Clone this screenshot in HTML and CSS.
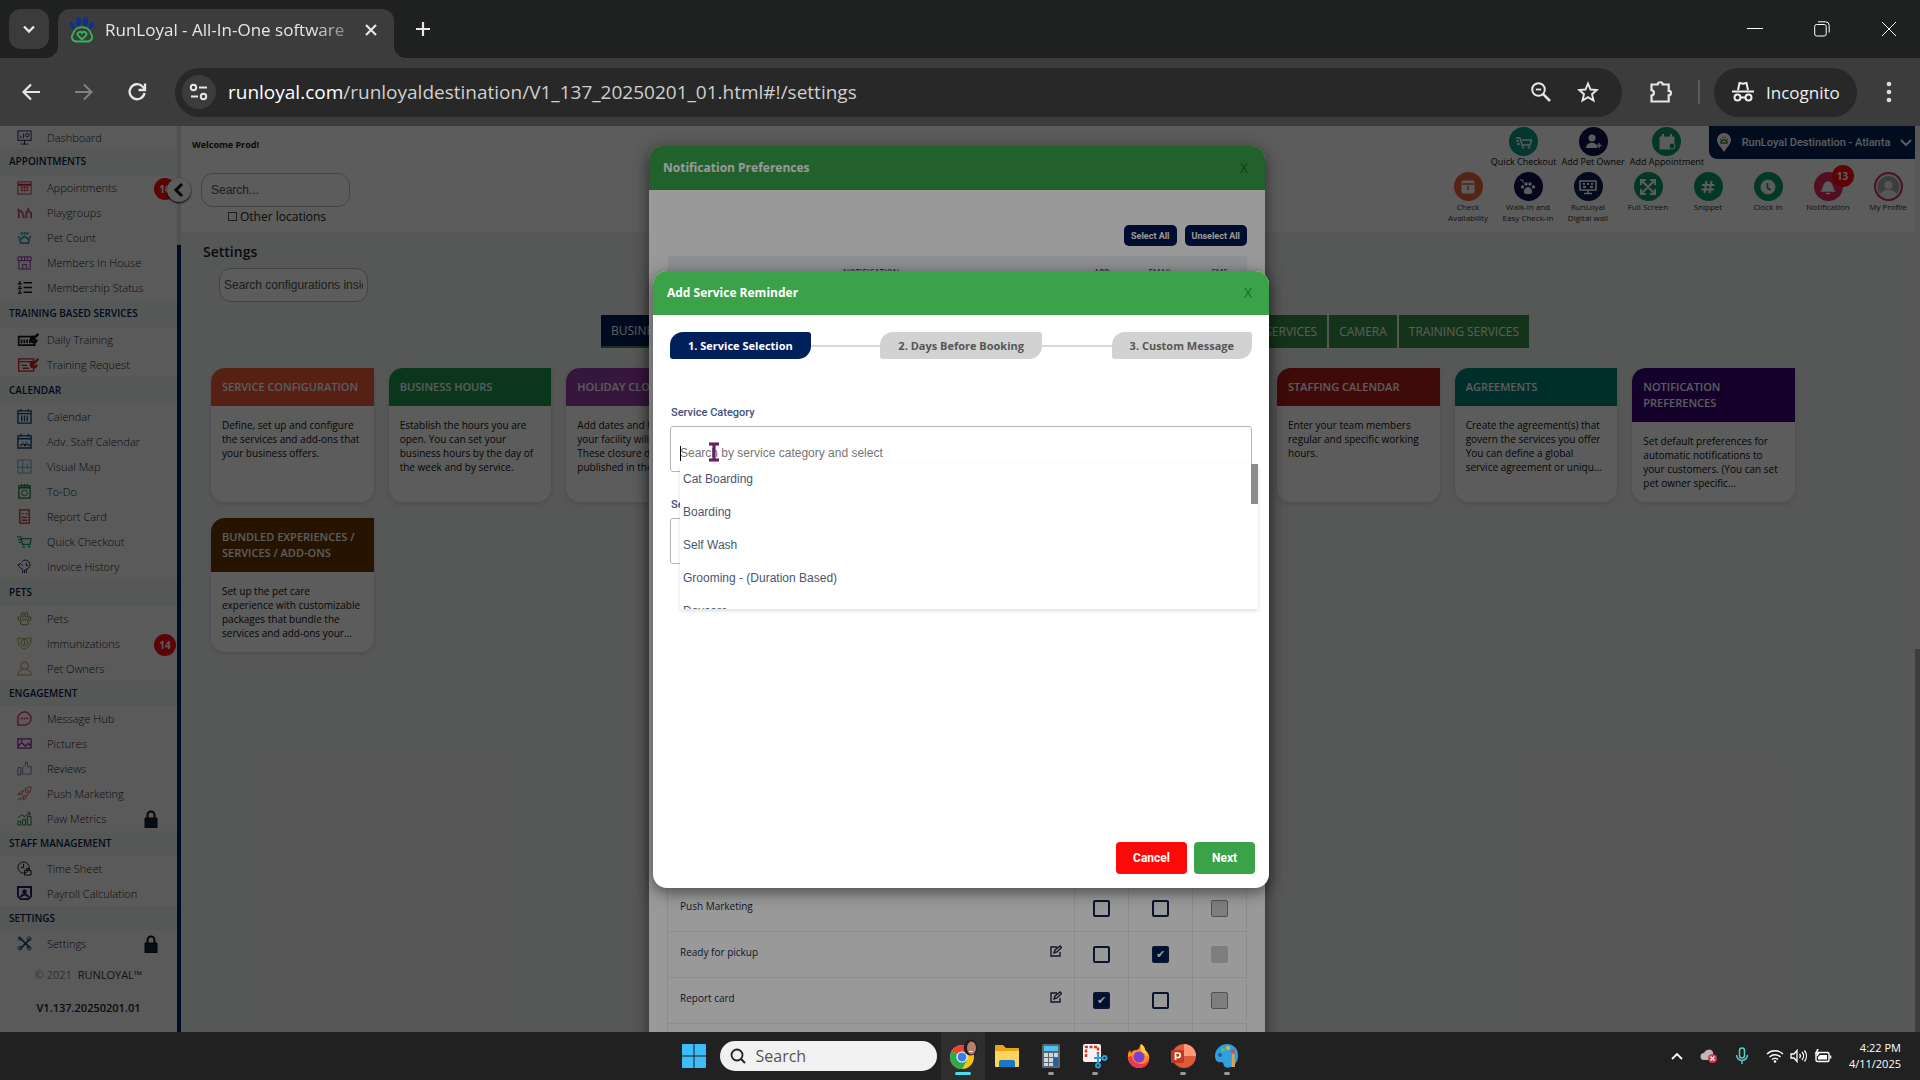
FILE: index.html
```html
<!DOCTYPE html>
<html lang="en">
<head>
<meta charset="utf-8">
<title>RunLoyal - All-In-One software</title>
<link rel="stylesheet" href="styles.css">
</head>
<body>
<header class="browser">
  <div class="tabstrip">
    <button class="tab-search" aria-label="Search tabs"><svg width="16" height="16" viewBox="0 0 16 16"><path d="M3 5.500l5 5 5-5" stroke-width="2.400"/></svg></button>
    <div class="tab">
      <svg class="favicon" width="26" height="26" viewBox="0 0 26 26"><g fill="#0b2f9c" stroke="none"><ellipse cx="9.500" cy="4.500" rx="2.400" ry="4.300"/><ellipse cx="16.500" cy="4.500" rx="2.400" ry="4.300"/><ellipse cx="3.300" cy="8.500" rx="2" ry="3.800" transform="rotate(-25 3.300 8.500)"/><ellipse cx="22.700" cy="8.500" rx="2" ry="3.800" transform="rotate(25 22.700 8.500)"/></g><g stroke="#35b35c" stroke-width="1.800"><path d="M7 24.500a4.500 4.500 0 0 1-3-7.500 9.300 9.300 0 0 1 18 0 4.500 4.500 0 0 1-3 7.500z"/><path d="M13 22.500l-4-4a2.300 2.300 0 0 1 4-2.500 2.300 2.300 0 0 1 4 2.500z"/></g></svg>
      <span class="tab-title">RunLoyal - All-In-One software</span>
      <button class="plain" aria-label="Close tab"><svg width="16" height="16" viewBox="0 0 16 16"><path d="M3 3l10 10M13 3L3 13" stroke-width="2.200"/></svg></button>
    </div>
    <button class="plain new-tab" aria-label="New tab"><svg width="18" height="18" viewBox="0 0 18 18"><path d="M9 2v14M2 9h14" stroke-width="2.200"/></svg></button>
    <div class="window-controls">
      <button class="plain" aria-label="Minimize"><svg width="16" height="16" viewBox="0 0 16 16"><path d="M0 7.500h16"/></svg></button>
      <button class="plain" aria-label="Restore"><svg width="16" height="16" viewBox="0 0 16 16"><rect x=".7" y="3.500" width="11.500" height="11.500" rx="2"/><path d="M4 .8h7.500a3.700 3.700 0 0 1 3.700 3.700v7"/></svg></button>
      <button class="plain" aria-label="Close"><svg width="16" height="16" viewBox="0 0 16 16"><path d="M1 1l14 14M15 1L1 15"/></svg></button>
    </div>
  </div>
  <div class="toolbar">
    <div class="nav-buttons">
      <button class="plain" aria-label="Back"><svg width="20" height="20" viewBox="0 0 20 20"><path d="M19 10H2.500M10 2.500L2.500 10l7.500 7.500" stroke-width="2.200"/></svg></button>
      <button class="plain faded" aria-label="Forward"><svg width="20" height="20" viewBox="0 0 20 20"><path d="M1 10h16.500M10 2.500l7.500 7.500-7.500 7.500" stroke-width="2"/></svg></button>
      <button class="plain" aria-label="Reload"><svg width="20" height="20" viewBox="0 0 20 20"><path d="M17.500 11a7.500 7.500 0 1 1-2-6.500l2.500 2.700" stroke-width="2.300"/><path d="M18 1.500V8h-6.500" stroke-width="2.300"/></svg></button>
    </div>
    <div class="omnibox">
      <button class="site-info" aria-label="Site information"><svg width="20" height="18" viewBox="0 0 20 18"><g stroke-width="2"><circle cx="4.500" cy="4.500" r="2.700"/><path d="M10 4.500h8M2 13.500h7"/><circle cx="14.500" cy="13.500" r="2.700"/></g></svg></button>
      <span class="url"><b>runloyal.com</b>/runloyaldestination/V1_137_20250201_01.html#!/settings</span>
      <button class="plain" aria-label="Zoom"><svg width="22" height="22" viewBox="0 0 22 22"><circle cx="8.500" cy="8.500" r="6.300" stroke-width="2"/><path d="M13.200 13.200L20 20" stroke-width="2.600"/><path d="M5.800 8.500h5.400" stroke-width="1.800"/></svg></button>
      <button class="plain" aria-label="Bookmark"><svg width="22" height="22" viewBox="0 0 22 22"><path d="M11 2.500l2.500 6 6.300.5-4.800 4.200 1.500 6.300-5.500-3.400-5.500 3.400L7 13.200 2.200 9l6.300-.5z" stroke-width="1.900"/></svg></button>
    </div>
    <button class="plain puzzle" aria-label="Extensions"><svg width="24" height="24" viewBox="0 0 24 24"><path d="M2.500 4.500h6.200c0-3 5-3 5 0h6v6.300c3 0 3 4.600 0 4.600v6.100H2.500v-6c3.200-.4 3.200-5 0-5.400z" stroke-width="2.200"/></svg></button>
    <span class="divider"></span>
    <button class="incognito"><svg width="22" height="22" viewBox="0 0 22 22"><path d="M6 9L7.500 2l3.500.8 3.500-.8L16 9"  stroke-width="2"/><path d="M0 10.500h22" stroke-width="2"/><g stroke-width="2"><circle cx="5.500" cy="16.500" r="3"/><circle cx="16.500" cy="16.500" r="3"/><path d="M8.500 16.500h5"/></g></svg>Incognito</button>
    <button class="plain" aria-label="Menu"><svg width="6" height="22" viewBox="0 0 6 22"><g fill="#ddd" stroke="none"><circle cx="3" cy="3" r="2.300"/><circle cx="3" cy="11" r="2.300"/><circle cx="3" cy="19" r="2.300"/></g></svg></button>
  </div>
</header>

<div class="viewport">
  <div class="app">
    <nav class="sidebar">
      <a href="#" class="item first"><svg viewBox="0 0 16 16" class="violet"><rect x="1" y="1" width="14" height="10"/><path d="M4 9V6M7 9V4M8 11v4M4 15h8"/><circle cx="11" cy="5.500" r="1.800"/></svg>Dashboard</a>
      <h2>APPOINTMENTS</h2>
      <a href="#" class="item"><svg viewBox="0 0 16 16" class="red"><rect x="1" y="2" width="14" height="13"/><path d="M1 5h14M4 8h2M7 8h2M10 8h2M4 11h2M7 11h2M10 11h2" stroke-width="2"/></svg>Appointments<span class="badge">16</span></a>
      <a href="#" class="item"><svg viewBox="0 0 16 16" class="pink"><path d="M2 14V6l3 1 2 4v3M2 6L1 4M15 14V9l-3-3-2 2v6M12 6V3" stroke-width="2"/></svg>Playgroups</a>
      <a href="#" class="item"><svg viewBox="0 0 16 16" class="cyan"><path d="M4 14l-1-4 5-3 5 3-1 4zM1 7l2 1M13 8l2-1M5 2v3M8 2v3M11 2v3" stroke-width="2"/></svg>Pet Count</a>
      <a href="#" class="item"><svg viewBox="0 0 16 16" class="purple"><path d="M1 2h14v4H1zM2 6v9h12V6M6 15v-5h4v5M5 2v4M8 2v4M11 2v4"/></svg>Members In House</a>
      <a href="#" class="item"><svg viewBox="0 0 16 16" class="black"><path d="M7 3h9M7 8h9M7 13h9M1 4h4M1 9h4M1 14h4M3 1v2M3 6v2M3 11v2" stroke-width="1.500"/></svg>Membership Status</a>
      <h2>TRAINING BASED SERVICES</h2>
      <a href="#" class="item"><svg viewBox="0 0 24 16" class="black wide"><path d="M1 5h17v9H1zM4 8v4M7 8v4M10 8v4M13 8v4" stroke-width="1.800"/><path d="M15 9l7-7M17 5a3 3 0 1 0 3 3" stroke-width="2.600"/></svg>Daily Training</a>
      <a href="#" class="item"><svg viewBox="0 0 24 16" class="red wide"><path d="M1 2h16v13H1zM1 5h14M4 9h6M5 12h7" stroke-width="1.400"/><path d="M15 9l7-7M17 5a3 3 0 1 0 3 3" stroke-width="2.400"/></svg>Training Request</a>
      <h2>CALENDAR</h2>
      <a href="#" class="item"><svg viewBox="0 0 16 16" class="blue"><path d="M1 2h14v13H1zM1 5h14M4 0v3M12 0v3M5 7v6M8 7v6M11 7v6" stroke-width="1.400"/></svg>Calendar</a>
      <a href="#" class="item"><svg viewBox="0 0 16 16" class="blue"><path d="M1 2h14v13H1zM1 5h14M4 0v3M12 0v3M4 13c0-3 5-3 5 0M8 13c0-3 5-3 5 0M6 8v1M10 8v1" stroke-width="1.500"/></svg>Adv. Staff Calendar</a>
      <a href="#" class="item"><svg viewBox="0 0 16 16" class="sky"><path d="M1 1h14v14H1zM6 1v14M1 9h14M11 5v6"/></svg>Visual Map</a>
      <a href="#" class="item"><svg viewBox="0 0 16 16" class="green"><path d="M2 2h12v13H2zM2 4h12M5 0v3M8 0v3M11 0v3" stroke-width="1.400"/><circle cx="8" cy="9.500" r="3"/></svg>To-Do</a>
      <a href="#" class="item"><svg viewBox="0 0 16 16" class="red"><path d="M3 1h10v14H3zM5 5h2M9 5h2M5 9h6M5 12h6" stroke-width="1.400"/></svg>Report Card</a>
      <a href="#" class="item"><svg viewBox="0 0 16 16" class="teal"><path d="M0 3h4l2 8h8l1-6H5M1 6h3M2 9h3" stroke-width="1.400"/><circle cx="7" cy="13.500" r="1"/><circle cx="13" cy="13.500" r="1"/></svg>Quick Checkout</a>
      <a href="#" class="item"><svg viewBox="0 0 16 16" class="violet"><path d="M5 3a5 5 0 1 1 5 8l-2 1v3M6 15v-4L3 9 1 6l3-1 2 2M10 11v4M10 4v3h2"/></svg>Invoice History</a>
      <h2>PETS</h2>
      <a href="#" class="item"><svg viewBox="0 0 16 16" class="olive"><path d="M4 14c-1-3 2-5 4-5s5 2 4 5c-1 1-7 1-8 0z"/><ellipse cx="2.500" cy="8" rx="1.500" ry="2"/><ellipse cx="6" cy="4" rx="1.500" ry="2.500"/><ellipse cx="10" cy="4" rx="1.500" ry="2.500"/><ellipse cx="13.500" cy="8" rx="1.500" ry="2"/></svg>Pets</a>
      <a href="#" class="item"><svg viewBox="0 0 16 16" class="lime"><path d="M1 2c4 1 10 1 14 0 0 7-2 10-7 12C3 12 1 9 1 2z"/><circle cx="8" cy="7" r="3.500"/><path d="M8 5v4"/></svg>Immunizations<span class="badge">14</span></a>
      <a href="#" class="item"><svg viewBox="0 0 16 16" class="orange"><circle cx="8" cy="5" r="4"/><path d="M1 15c0-4 2-5 5-6M15 15c0-4-2-5-5-6M1 15h14"/></svg>Pet Owners</a>
      <h2 class="tight">ENGAGEMENT</h2>
      <a href="#" class="item"><svg viewBox="0 0 16 16" class="rose"><path d="M1 15V8a7 7 0 1 1 7 7zM4 8h2M7 8h2M10 8h2" stroke-width="1.400"/></svg>Message Hub</a>
      <a href="#" class="item"><svg viewBox="0 0 16 16" class="purple"><path d="M1 3h14v10H1zM1 11l4-4 4 4 3-3 3 3M4 5h2" stroke-width="1.400"/></svg>Pictures</a>
      <a href="#" class="item"><svg viewBox="0 0 16 16" class="lilac"><path d="M1 7h3v8H1zM6 14V7l3-3V1h2v5h4v8z"/></svg>Reviews</a>
      <a href="#" class="item"><svg viewBox="0 0 16 16" class="flame"><path d="M5 9c1-5 5-8 10-8 0 5-3 9-8 10zM5 9L1 9l3-3 2 0M7 11v4l3-3V10M1 15l3-3M3 15l3-3"/><circle cx="10.500" cy="5.500" r="1.500"/></svg>Push Marketing</a>
      <a href="#" class="item"><svg viewBox="0 0 16 16" class="green"><path d="M1 11h3v4H1zM6 9h3v6H6zM11 6h4v9h-4zM1 7l4-3 3 2 6-4M11 1l3 1-1 3"/></svg>Paw Metrics<svg class="lock" viewBox="0 0 14 18"><path d="M3.500 9V5a3.500 3.500 0 0 1 7 0v4" stroke-width="2"/><path class="body" d="M1 8h12v10H1z"/></svg></a>
      <h2 class="tight">STAFF MANAGEMENT</h2>
      <a href="#" class="item"><svg viewBox="0 0 16 16" class="black"><circle cx="7" cy="7" r="6"/><path d="M7 3v4H4M8 10h7v5H8zM10 10V8h3v2"/></svg>Time Sheet</a>
      <a href="#" class="item"><svg viewBox="0 0 16 16" class="violet"><path d="M1 1h14v10l-3 3H4l-3-3z" stroke-width="2"/><circle cx="8" cy="6" r="2" fill="currentColor"/><path d="M4 12c1-4 7-4 8 0" stroke-width="2"/></svg>Payroll Calculation</a>
      <h2 class="tight">SETTINGS</h2>
      <a href="#" class="item"><svg viewBox="0 0 16 16" class="steel"><path d="M2 1l12 12M14 3L3 14" stroke-width="2"/><circle cx="13" cy="3" r="2"/><circle cx="3" cy="13" r="2"/><circle cx="13" cy="13" r="2"/><circle cx="3" cy="3" r="1.500"/></svg>Settings<svg class="lock" viewBox="0 0 14 18"><path d="M3.500 9V5a3.500 3.500 0 0 1 7 0v4" stroke-width="2"/><path class="body" d="M1 8h12v10H1z"/></svg></a>
      <p class="copyright">© 2021 &nbsp;<b>RUNLOYAL™</b></p>
      <p class="version">V1.137.20250201.01</p>
    </nav>
    <div class="rail">
      <span class="rail-thumb"></span>
      <button class="collapse" aria-label="Collapse menu"><svg width="12" height="16" viewBox="0 0 12 16"><path d="M9 2L3 8l6 6" stroke="#111" stroke-width="3"/></svg></button>
    </div>
    <main>
      <div class="topbar">
        <div class="top-left">
          <p class="welcome">Welcome Prod!</p>
          <input class="round-input" type="text" placeholder="Search..." aria-label="Search">
          <label class="other"><input type="checkbox">Other locations</label>
        </div>
        <div class="top-right">
          <div class="quick-row">
            <a href="#" class="action"><i class="disc c-teal"><svg width="18" height="16" viewBox="0 0 18 16"><path d="M1 4h4l2 7h8l1.500-5H7M1 7h3M2 10h3" stroke-width="1.500"/><circle cx="8" cy="13.500" r="1"/><circle cx="14" cy="13.500" r="1"/></svg></i>Quick Checkout</a>
            <a href="#" class="action"><i class="disc c-navy"><svg width="18" height="18" viewBox="0 0 18 18"><g fill="#fff" stroke="none"><circle cx="8" cy="5" r="3.500"/><path d="M2 15c0-7 12-7 11 0z"/></g><path d="M15 10v5M12.500 12.500h5" stroke-width="1.300"/></svg></i>Add Pet Owner</a>
            <a href="#" class="action"><i class="disc c-green"><svg width="18" height="18" viewBox="0 0 18 18"><path d="M2 4h14v8l-4 4H2z" fill="#fff"/><path d="M5 1v4M13 1v4" stroke-width="2"/><circle cx="14" cy="13" r="3" fill="#0a9d6a"/></svg></i>Add Appointment</a>
            <button class="location"><svg width="16" height="20" viewBox="0 0 16 20"><path d="M8 19C5 14 1 11 1 7a7 7 0 0 1 14 0c0 4-4 7-7 12z" fill="#fff" stroke="none"/><path d="M5 10c0-4 6-4 6 0zM4 6.500h1M6.500 4.500h1M9 4.500h1M11 6.500h1" stroke="#4b8b2f" stroke-width="1.500"/></svg>RunLoyal Destination - Atlanta<svg width="12" height="8" viewBox="0 0 12 8"><path d="M1 1l5 5 5-5" stroke-width="2"/></svg></button>
          </div>
          <div class="icon-row">
            <a href="#" class="action"><i class="disc c-orange"><svg width="16" height="16" viewBox="0 0 16 16"><rect x="2" y="2" width="12" height="12" rx="1" fill="#fff"/><path d="M2 5h12M8 7v4" stroke="#e0603d" stroke-width="1.500"/></svg></i>Check<br>Availability</a>
            <a href="#" class="action"><i class="disc c-navy"><svg width="18" height="18" viewBox="0 0 18 18"><g fill="#fff" stroke="none"><path d="M5 15c-1-3 2-6 4-6s5 3 4 6c-1 1.500-7 1.500-8 0z"/><circle cx="3.500" cy="9" r="1.700"/><circle cx="7" cy="6" r="1.800"/><circle cx="11" cy="6" r="1.800"/><circle cx="14.500" cy="9" r="1.700"/></g><path d="M1 2h3v3" stroke-width="1"/></svg></i>Walk-in and<br>Easy Check-in</a>
            <a href="#" class="action"><i class="disc c-wall"><svg width="18" height="16" viewBox="0 0 18 16"><path d="M1 2h16v9H1zM9 11v3M5 14.500h8" stroke-width="1.600"/><path d="M4 5h2M8 5h2M12 5h2M4 8h3M11 8h3" stroke-width="1.800"/></svg></i>RunLoyal<br>Digital wall</a>
            <a href="#" class="action"><i class="disc c-green"><svg width="16" height="16" viewBox="0 0 16 16"><path d="M2 2l12 12M14 2L2 14M1 6V1h5M10 1h5v5M15 10v5h-5M6 15H1v-5" stroke-width="2"/></svg></i>Full Screen</a>
            <a href="#" class="action"><i class="disc c-green"><svg width="14" height="14" viewBox="0 0 14 14"><path d="M5.500 1l-2 12M10.500 1l-2 12M1 5h12.500M.5 9.500H13" stroke-width="2"/></svg></i>Snippet</a>
            <a href="#" class="action"><i class="disc c-green"><svg width="16" height="16" viewBox="0 0 16 16"><circle cx="8" cy="8" r="7" fill="#fff"/><path d="M7.500 4v5l3 2" stroke="#0a9d6a" stroke-width="1.600"/></svg></i>Clock In</a>
            <a href="#" class="action"><i class="disc c-rose"><svg width="16" height="16" viewBox="0 0 16 16"><path d="M2 12c2-2 1-9 6-9s4 7 6 9zM6 14.500h4" fill="#fff" stroke-width="1.500"/></svg><b class="count">13</b></i>Notification</a>
            <a href="#" class="action"><i class="disc c-ring"><svg width="23" height="23" viewBox="0 0 23 23"><g fill="#aaa" stroke="none"><path d="M3 19a11 11 0 1 1 17 0c-4-6-13-6-17 0z"/></g><circle cx="11.500" cy="10" r="4" fill="#eee" stroke="none"/></svg></i>My Profile</a>
          </div>
        </div>
      </div>
      <section class="settings">
        <h1>Settings</h1>
        <input class="round-input config" type="text" placeholder="Search configurations inside" aria-label="Search configurations">
        <div class="tabs">
          <button class="active">BUSINESS</button><button class="grow">SERVICES</button><button>CAMERA</button><button>TRAINING SERVICES</button>
        </div>
        <div class="cards">
          <article class="card"><h3 class="k-coral">SERVICE CONFIGURATION</h3><p>Define, set up and configure the services and add-ons that your business offers.</p></article>
          <article class="card"><h3 class="k-green">BUSINESS HOURS</h3><p>Establish the hours you are open. You can set your business hours by the day of the week and by service.</p></article>
          <article class="card"><h3 class="k-violet">HOLIDAY CLOSURES</h3><p>Add dates and hours when your facility will be closed. These closure dates will be published in the app.</p></article>
          <article class="card seventh"><h3 class="k-red">STAFFING CALENDAR</h3><p>Enter your team members regular and specific working hours.</p></article>
          <article class="card"><h3 class="k-teal">AGREEMENTS</h3><p>Create the agreement(s) that govern the services you offer You can define a global service agreement or uniqu...</p></article>
          <article class="card"><h3 class="k-indigo">NOTIFICATION PREFERENCES</h3><p>Set default preferences for automatic notifications to your customers. (You can set pet owner specific...</p></article>
          <article class="card"><h3 class="k-brown">BUNDLED EXPERIENCES / SERVICES / ADD-ONS</h3><p>Set up the pet care experience with customizable packages that bundle the services and add-ons your...</p></article>
        </div>
      </section>
    </main>
  </div>
  <div class="page-scroll"></div>

  <div class="backdrop lower">
    <section class="modal prefs" aria-label="Notification Preferences">
      <header><h2>Notification Preferences</h2><button class="x" aria-label="Close">X</button></header>
      <div class="prefs-body">
        <div class="bulk"><button>Select All</button><button>Unselect All</button></div>
        <table>
          <thead><tr><th class="name">NOTIFICATION</th><th>APP</th><th>EMAIL</th><th class="sms">SMS</th></tr></thead>
          <tbody>
            <tr class="gap-row"><td></td><td></td><td></td><td></td></tr>
            <tr><td class="name"><div>Push Marketing</div></td><td><input type="checkbox" aria-label="Push Marketing app"></td><td><input type="checkbox" aria-label="Push Marketing email"></td><td><input type="checkbox" disabled aria-label="Push Marketing SMS"></td></tr>
            <tr><td class="name"><div>Ready for pickup<svg width="12" height="12" viewBox="0 0 12 12"><path d="M7 2H1v9h9V7M4 8l1-3 5-4 1.500 1.500L7 7z" stroke-width="1.400"/></svg></div></td><td><input type="checkbox" aria-label="Ready for pickup app"></td><td><input type="checkbox" checked aria-label="Ready for pickup email"></td><td><input type="checkbox" class="soft" disabled aria-label="Ready for pickup SMS"></td></tr>
            <tr><td class="name"><div>Report card<svg width="12" height="12" viewBox="0 0 12 12"><path d="M7 2H1v9h9V7M4 8l1-3 5-4 1.500 1.500L7 7z" stroke-width="1.400"/></svg></div></td><td><input type="checkbox" checked aria-label="Report card app"></td><td><input type="checkbox" aria-label="Report card email"></td><td><input type="checkbox" disabled aria-label="Report card SMS"></td></tr>
            <tr><td></td><td></td><td></td><td></td></tr>
          </tbody>
        </table>
      </div>
    </section>
  </div>

  <div class="backdrop upper">
    <section class="modal reminder" aria-label="Add Service Reminder">
      <header><h2>Add Service Reminder</h2><button class="x" aria-label="Close">X</button></header>
      <div class="reminder-body">
        <div class="steps"><span class="step on">1. Service Selection</span><i></i><span class="step">2. Days Before Booking</span><i></i><span class="step">3. Custom Message</span></div>
        <div class="field">
          <label for="category">Service Category</label>
          <div class="combo">
            <input id="category" type="text" placeholder="Search by service category and select">
            <span class="caret"></span>
            <svg class="ibeam" width="12" height="20" viewBox="0 0 12 20"><path d="M1 2h10M6 2v16M1 18h10" stroke="#4a1048" stroke-width="3"/><path d="M1 2h10M6 2v16M1 18h10" stroke="#8a2a80" stroke-width="1"/></svg>
            <ul class="menu"><li>Cat Boarding</li><li>Boarding</li><li>Self Wash</li><li>Grooming - (Duration Based)</li><li>Daycare</li></ul>
          </div>
        </div>
        <div class="field">
          <label for="service">Service</label>
          <div class="combo"><input id="service" type="text"></div>
        </div>
        <div class="foot"><button class="cancel">Cancel</button><button class="next">Next</button></div>
      </div>
    </section>
  </div>
</div>

<footer class="taskbar">
  <div class="dock">
    <button class="app-btn start" aria-label="Start"><svg width="24" height="24" viewBox="0 0 24 24"><path fill="#3cbcf8" stroke="none" d="M0 1q0-1 1-1h10.500v11.500H0zM12.500 0H23q1 0 1 1v10.500H12.500zM0 12.500h11.500V24H1q-1 0-1-1zM12.500 12.500H24V23q0 1-1 1H12.500z"/></svg></button>
    <label class="search"><svg width="16" height="16" viewBox="0 0 16 16"><circle cx="7" cy="7" r="5.500" stroke="#222" stroke-width="1.800"/><path d="M11 11l4 4" stroke="#222" stroke-width="2"/></svg><input type="text" placeholder="Search" aria-label="Search"></label>
    <button class="app-btn current" aria-label="Chrome"><svg width="30" height="34" viewBox="0 0 30 34"><g stroke="none"><circle cx="14" cy="18" r="12" fill="#fbc116"/><path d="M14 18L3.600 12A12 12 0 0 1 24.400 12z" fill="#ea4335"/><path d="M3.600 12A12 12 0 0 0 14 30l5.200-9L14 18z" fill="#2fa84f"/><circle cx="14" cy="18" r="5.600" fill="#fff"/><circle cx="14" cy="18" r="4.500" fill="#3b7de0"/><ellipse cx="22.500" cy="8.500" rx="6.800" ry="8" fill="#2a1c1a"/><ellipse cx="23.500" cy="9" rx="4.500" ry="6.500" fill="#b5806a"/><path d="M20.500 12q2.500 2 5 0" fill="#fff"/></g></svg></button>
    <button class="app-btn" aria-label="File Explorer"><svg width="26" height="26" viewBox="0 0 26 26"><g stroke="none"><path d="M1 3q0-1 1-1h7l3 3h12q1 0 1 1v16H1z" fill="#e8a317"/><path d="M1 8h24v15q0 1-1 1H2q-1 0-1-1z" fill="#ffd45e"/><path d="M5 24v-5q0-2 2-2h12q2 0 2 2v5z" fill="#1878c8"/></g></svg></button>
    <button class="app-btn open" aria-label="Calculator"><svg width="20" height="26" viewBox="0 0 20 26"><g stroke="none"><rect x="1" y="1" width="18" height="24" rx="1.500" fill="#5b6670"/><rect x="3" y="3" width="14" height="5" fill="#4fc3f0"/><path d="M3 10h4v4H3zM8 10h4v4H8zM13 10h4v4h-4zM3 15h4v4H3zM8 15h4v4H8zM3 20h4v3H3zM8 20h4v3H8z" fill="#cfd6dc"/><path d="M13 15h4v8h-4z" fill="#1f5fa8"/></g></svg></button>
    <button class="app-btn open" aria-label="Snipping Tool"><svg width="26" height="26" viewBox="0 0 26 26"><rect x="1" y="1" width="18" height="18" rx="2" fill="#f3f3f3" stroke="none"/><path d="M4 14V4h12v7" stroke="#d23b2a" stroke-width="2.500" stroke-dasharray="3 1.500"/><g stroke="#2c9bd6" stroke-width="2"><path d="M12 15h9M16 10v10"/><circle cx="22.500" cy="15" r="2"/><circle cx="16" cy="22.500" r="2"/></g></svg></button>
    <button class="app-btn" aria-label="Firefox"><svg width="26" height="26" viewBox="0 0 26 26"><g stroke="none"><path d="M15 1c3 2 4 4 4 6 4 3 5 7 4 10-1 5-5 8-10 8S3 21 2 16c-.5-4 0-7 2-9l1 3c1-2 3-3 5-3 4 0 3-4 5-6z" fill="#ff8a1e"/><path d="M2 14c0 6 5 11 11 11s10-4 10-9c-3 5-8 6-12 4-4-1-5-5-5-7z" fill="#f0364f"/><circle cx="13" cy="14" r="5.500" fill="#7b3fd6"/><path d="M15 1c3 2 4 4 4 6 2 2 3 4 2 7-1-5-6-4-6-7z" fill="#ffd23c"/></g></svg></button>
    <button class="app-btn open" aria-label="PowerPoint"><svg width="26" height="26" viewBox="0 0 26 26"><g stroke="none"><circle cx="14" cy="13" r="12" fill="#e0593a"/><path d="M14 1a12 12 0 0 1 12 12H14z" fill="#ff9a76"/><rect x="1" y="7" width="13" height="13" rx="1.500" fill="#c03a1c"/></g><path d="M5.500 17v-7h2.500a2 2 0 0 1 0 4.500H5.500" stroke="#fff" stroke-width="1.700"/></svg></button>
    <button class="app-btn open" aria-label="Paint"><svg width="26" height="26" viewBox="0 0 26 26"><g stroke="none"><path d="M13 1C6 1 1 7 1 13c0 5 3 7 6 6 3 0 2 3 4 5 6 3 14-4 13-12C24 5 19 1 13 1z" fill="#2f9fe0"/><circle cx="6" cy="12" r="2" fill="#1f5fa8"/><circle cx="9" cy="7" r="2" fill="#5ac84a"/><circle cx="14" cy="5" r="2" fill="#f0b428"/><circle cx="19" cy="8" r="2" fill="#e0483a"/><path d="M18 11h2.500l.5 13h-3.500z" fill="#e0a050"/></g></svg></button>
  </div>
  <div class="tray">
    <svg width="12" height="8" viewBox="0 0 12 8"><path d="M1 7l5-5 5 5" stroke-width="1.800"/></svg>
    <svg width="18" height="16" viewBox="0 0 18 16"><path d="M4 12a3.500 3.500 0 0 1 0-7 5 5 0 0 1 9-1v8z" fill="#b9b9b9" stroke="none"/><circle cx="12.500" cy="10.500" r="4.500" fill="#d8394a" stroke="none"/><path d="M10.500 8.500l4 4M14.500 8.500l-4 4" stroke-width="1.300"/></svg>
    <svg width="14" height="18" viewBox="0 0 14 18"><g stroke="#5fc9c4" stroke-width="1.500"><rect x="4.500" y="1" width="5" height="10" rx="2.500"/><path d="M1.500 8a5.500 5.500 0 0 0 11 0M7 14v3"/></g></svg>
    <div class="status">
      <svg width="18" height="14" viewBox="0 0 18 14"><path d="M1 5a11.500 11.500 0 0 1 16 0M3.500 8a8 8 0 0 1 11 0M6 10.500a4.500 4.500 0 0 1 6 0" stroke-width="1.400"/><circle cx="9" cy="12.500" r="1.300" fill="#fff" stroke="none"/></svg>
      <svg width="18" height="14" viewBox="0 0 18 14"><path d="M1 5h3l3-3.500v11L4 9H1zM9.500 5a3 3 0 0 1 0 4M12 3a6 6 0 0 1 0 8M14.500 1.500a9 9 0 0 1 0 11" stroke-width="1.300"/></svg>
      <svg width="18" height="14" viewBox="0 0 18 14"><rect x="2" y="3.500" width="13" height="9" rx="1.500" stroke-width="1.400"/><path d="M6 6h7v4.500H4V8z" fill="#fff" stroke="none"/><path d="M16.500 6.500v3M4 0L2 4h2.500L3 7" stroke-width="1.600"/></svg>
    </div>
    <p class="clock">4:22 PM<br>4/11/2025</p>
  </div>
</footer>
</body>
</html>
```

FILE: styles.css
```css
* { box-sizing: border-box; }
html, body { height: 100%; }
body {
  margin: 0;
  display: flex;
  flex-direction: column;
  overflow: hidden;
  font-family: "Open Sans", "Noto Sans", sans-serif;
  color: #222;
}
button, input { font: inherit; color: inherit; }
button { border: 0; padding: 0; cursor: pointer; }
svg { fill: none; stroke: currentColor; flex: none; display: block; }
h1, h2, h3, p, ul { margin: 0; padding: 0; }
a { color: inherit; text-decoration: none; }
.plain { background: none; display: flex; }

/* browser frame */
.browser { background: #1f2120; color: #e6e6e6; flex: none; }
.tabstrip { display: flex; align-items: center; height: 58px; padding-left: 9px; }
.tab-search {
  width: 40px; height: 40px; border-radius: 12px; background: #3b3b3b;
  display: grid; place-items: center;
}
.tab {
  position: relative;
  align-self: flex-end;
  display: flex; align-items: center;
  width: 336px; height: 49px; margin-left: 9px; padding: 0 15px 8px 11px;
  border-radius: 12px 12px 0 0; background: #3c3c3c;
}
.tab::before, .tab::after {
  content: ""; position: absolute; bottom: 0; width: 12px; height: 12px;
}
.tab::before { left: -12px; background: radial-gradient(circle at 0 0, #1f2120 12px, #3c3c3c 12px); }
.tab::after { right: -12px; background: radial-gradient(circle at 100% 0, #1f2120 12px, #3c3c3c 12px); }
.tab-title {
  flex: 1; margin: 0 16px 0 10px; font-size: 17px; white-space: nowrap; overflow: hidden;
  -webkit-mask-image: linear-gradient(90deg, #000 85%, #0006);
  mask-image: linear-gradient(90deg, #000 85%, #0006);
}
.new-tab { margin-left: 20px; }
.window-controls { margin-left: auto; display: flex; gap: 51px; padding-right: 23px; color: #fff; }
.toolbar { display: flex; align-items: center; height: 68px; padding: 0 28px 0 21px; background: #3c3c3c; }
.nav-buttons { display: flex; gap: 33px; width: 154px; }
.faded { color: #828282; }
.omnibox {
  flex: 1; display: flex; align-items: center; gap: 25px; height: 49px;
  padding: 0 23px 0 7px; border-radius: 25px; background: #282828;
}
.site-info {
  width: 34px; height: 34px; border-radius: 50%; background: #3c3c3c; color: #e6e6e6;
  display: grid; place-items: center; margin-right: -13px;
}
.url { flex: 1; font-size: 19px; color: #cfcfcf; white-space: nowrap; }
.url b { font-weight: 400; color: #fff; }
.puzzle { margin: 0 25px 0 27px; }
.divider { width: 2px; height: 24px; background: #5a5a5a; margin-right: 14px; }
.incognito {
  display: flex; align-items: center; gap: 12px; width: 143px; height: 49px; padding-left: 18px;
  border-radius: 25px; background: #282828; font-size: 17px; color: #eee; margin-right: 29px;
}

/* page */
.viewport { flex: 1; position: relative; min-height: 0; overflow: hidden; background: #fff; }
.app { display: flex; height: 100%; }
.sidebar { width: 177px; flex: none; font-size: 11px; overflow: hidden; background: #fafcfb; }
.sidebar h2 {
  height: 27px; padding-left: 9px; background: #eff4f3; color: #0a1c4c;
  font-size: 10px; line-height: 27px; font-weight: 600;
}
.sidebar h2.tight { height: 25px; line-height: 25px; }
.item { display: flex; align-items: center; position: relative; height: 25px; padding-left: 17px; color: #222; font-weight: 300; }
.item.first { height: 22px; }
.item > svg { width: 15px; height: 15px; margin-right: 15px; }
.item > svg.wide { width: 24px; margin-right: 6px; }
.item > svg.lock { width: 14px; height: 18px; margin: 0 19px 0 auto; color: #111; }
.lock .body { fill: #0c2c3c; stroke: #111; }
.badge, .count {
  display: grid; place-items: center; border-radius: 50%; background: #ff0c0c; color: #fff;
  font-style: normal; font-weight: 700;
}
.badge { position: absolute; right: 1px; top: 3px; width: 22px; height: 22px; font-size: 10px; }
.violet { color: #2b1769; }
.red { color: #d0202a; }
.pink { color: #c25480; }
.cyan { color: #2fa5b5; }
.purple { color: #9428a8; }
.black { color: #111; }
.blue { color: #0d4a8c; }
.sky { color: #5aa9c8; }
.green { color: #158040; }
.teal { color: #169a72; }
.olive { color: #8f8020; }
.lime { color: #9cac38; }
.orange { color: #d08a5c; }
.rose { color: #d8245c; }
.lilac { color: #9070c8; }
.flame { color: #dc5c34; }
.steel { color: #10607c; }
.copyright, .version { text-align: center; font-size: 11px; }
.copyright { margin-top: 11px; line-height: 16px; color: #888; }
.copyright b { font-weight: 400; color: #333; }
.version { margin-top: 17px; line-height: 16px; color: #0a1c3c; font-weight: 600; }
.rail { position: relative; width: 4px; flex: none; background: #dde2e6; padding-top: 119px; }
.rail-thumb { display: block; height: 100%; background: #00245c; }
.collapse {
  position: absolute; left: -10px; top: 52px; width: 24px; height: 24px; border-radius: 50%;
  display: grid; place-items: center; background: #fff; box-shadow: 0 1px 2px #000;
}
main { flex: 1; min-width: 0; display: flex; flex-direction: column; }
.topbar { height: 106px; display: flex; justify-content: space-between; background: #fff; }
.top-left { padding-left: 11px; }
.welcome { font-size: 9px; font-weight: 700; line-height: 14px; margin: 12px 0 21px; }
.round-input {
  display: block; width: 149px; height: 34px; margin-left: 9px; padding: 0 9px;
  border: 1px solid #bbb; border-radius: 12px; background: #fff;
  font: 12px "Liberation Sans", Arial, sans-serif;
}
.round-input::placeholder { color: #555; opacity: 1; }
.other { display: flex; align-items: center; gap: 3px; margin: 1px 0 0 36px; font-size: 12px; line-height: 17px; }
.other input { width: 9px; height: 9px; margin: 0; appearance: none; border: 1px solid #555; }
.quick-row { display: flex; justify-content: flex-end; align-items: flex-start; gap: 5px; height: 46px; }
.action { display: flex; flex-direction: column; align-items: center; text-align: center; white-space: nowrap; color: #111; }
.quick-row .action { font-size: 9px; line-height: 12px; padding-top: 1px; }
.icon-row { display: grid; grid-template-columns: repeat(8, 60px); justify-content: end; padding-right: 2px; }
.icon-row .action { font-size: 8px; line-height: 11px; color: #333; }
.disc { position: relative; width: 29px; height: 29px; border-radius: 50%; display: grid; place-items: center; color: #fff; }
.c-teal { background: #0a9a88; }
.c-navy { background: #10134f; }
.c-wall { background: #0a2150; }
.c-green { background: #0a9d6a; }
.c-orange { background: #ee6742; }
.c-rose { background: #e22b5d; }
.c-ring { background: #eee; border: 2px solid #d83062; }
.count { position: absolute; right: -11px; top: -7px; width: 22px; height: 22px; font-size: 10px; }
.location {
  display: flex; align-items: center; justify-content: space-between; width: 206px; height: 33px;
  margin-right: 5px; padding: 0 3px 0 7px; border-radius: 0 0 0 8px; background: #082458;
  font: 500 11px Roboto, sans-serif; color: #fff;
}
.settings { flex: 1; padding: 11px 125px 0 30px; background: #f1f4f2; }
h1 { margin-left: -8px; font-size: 14px; line-height: 18px; font-weight: 600; color: #16213c; }
.config { margin: 7px 0 0 8px; padding: 0 4px 0 4px; }
.tabs { display: flex; gap: 2px; width: 928px; margin: 13px 0 20px 390px; height: 33px; }
.tabs button { background: #36934a; color: #fff; font-size: 12px; padding: 0 10px; }
.tabs .active { background: #001f5c; width: 150px; text-align: left; border-bottom: 2px solid #36934a; }
.tabs .grow { flex: 1; text-align: right; }
.cards { display: grid; grid-template-columns: repeat(9, 1fr); gap: 16px 15px; }
.seventh { grid-column: 7; }
.card { min-height: 134px; border-radius: 14px 0 14px 14px; background: #fff; box-shadow: 0 2px 6px #0002; overflow: hidden; }
.card h3 { padding: 11px 10px 11px 11px; font-size: 11px; line-height: 16px; font-weight: 600; color: #fff; }
.card p { padding: 12px 11px 0 11px; font-size: 10px; line-height: 14px; color: #111; }
.k-coral { background: #f05a3c; }
.k-green { background: #1f9a50; }
.k-violet { background: #9c3fae; }
.k-red { background: #b0201f; }
.k-teal { background: #00837a; }
.k-indigo { background: #3b0078; }
.k-brown { background: #6e3a00; }
.page-scroll { position: absolute; right: 0; top: 0; bottom: 0; width: 5px; background: linear-gradient(#f3f3f3 523px, #aaa 523px); }

/* dialogs */
.backdrop { position: absolute; inset: 0; display: flex; justify-content: center; align-items: flex-start; background: #0006; }
.lower { padding: 20px 6px 0 0; }
.upper { padding: 145px 0 0 2px; }
.modal { width: 616px; border-radius: 14px; background: #fff; box-shadow: 0 4px 16px #0008; }
.modal header {
  display: flex; align-items: center; justify-content: space-between; height: 44px; padding: 0 17px 2px 14px;
  border-radius: 14px 14px 0 0; background: #3ba24a; color: #fff;
}
.modal header h2 { font-size: 12px; font-weight: 700; }
.x { background: none; color: #1f6a2c; font-size: 14px; }
.prefs-body { padding: 35px 18px 0; }
.bulk { display: flex; justify-content: flex-end; gap: 8px; margin-bottom: 10px; }
.bulk button {
  height: 21px; padding: 0 7px; border-radius: 5px; background: #001450; color: #fff;
  font: 700 9px Roboto, sans-serif;
}
table { width: 100%; border-collapse: collapse; table-layout: fixed; }
th { height: 31px; background: #eef0f3; font-size: 8px; font-weight: 600; color: #555; width: 54px; }
th:nth-child(3) { width: 64px; }
th.name { width: auto; }
th.sms { width: 54px; }
td { height: 46px; padding: 0; border: 1px solid #ececee; text-align: center; }
.gap-row td { height: 598px; }
td.name div { display: flex; justify-content: space-between; padding: 0 12px; margin-top: -4px; font-size: 10px; font-weight: 500; color: #1c2748; }
td input {
  appearance: none; display: block; margin: 0 auto; width: 17px; height: 17px;
  border: 2px solid #10224f; border-radius: 2px;
}
td input:checked { background: #001c50; display: grid; place-items: center; }
td input:checked::before { content: "✔"; color: #fff; font: 11px/13px "DejaVu Sans", sans-serif; }
td input:disabled { background: #d2d2d2; border-color: #888; border-width: 1px; }
td input.soft { border-color: #d2d2d2; }
.reminder-body { display: flex; flex-direction: column; min-height: 573px; padding: 17px 17px 0; }
.steps { display: flex; align-items: center; margin-bottom: 46px; }
.steps i { flex: 1; height: 2px; background: #d6d6d6; }
.step {
  height: 27px; padding: 0 18px; border-radius: 13px 3px 13px 3px; background: #d2d2d2;
  font-size: 11px; line-height: 27px; font-weight: 700; color: #555;
}
.step.on { background: #00205b; color: #fff; }
.field { margin-bottom: 25px; font-family: "Liberation Sans", Arial, sans-serif; }
.field label { display: block; margin-bottom: 5px; padding-left: 1px; font: 500 11px/16px Roboto, sans-serif; color: #40507a; }
.combo { position: relative; }
.combo input {
  display: block; width: 100%; height: 46px; padding: 8px 9px 0; border: 1px solid #b5b5b5; border-radius: 3px;
  background: #fff; font-size: 12px;
}
.combo input::placeholder { color: #757575; opacity: 1; }
.caret { position: absolute; left: 10px; top: 20px; width: 1px; height: 15px; background: #000; }
.ibeam { position: absolute; left: 38px; top: 16px; }
.menu {
  position: absolute; z-index: 1; left: 10px; right: -6px; top: 38px; height: 145px; overflow: hidden;
  list-style: none; background: #fff; box-shadow: 0 2px 4px #0002; font-size: 12px; color: #4a5670;
}
.menu::after { content: ""; position: absolute; right: 0; top: 0; width: 7px; height: 40px; background: #8c8c8c; }
.menu li { height: 33px; line-height: 31px; padding-left: 3px; }
.foot { display: flex; justify-content: flex-end; gap: 7px; margin: auto -3px 14px 0; }
.foot button { height: 32px; border-radius: 4px; color: #fff; font: 700 12px Roboto, sans-serif; }
.foot .cancel { width: 71px; background: #ff0808; }
.foot .next { width: 61px; background: #3ba24a; }

/* taskbar */
.taskbar { flex: none; display: grid; grid-template-columns: 1fr auto 1fr; height: 48px; background: #212121; color: #fff; }
.dock { grid-column: 2; display: flex; align-items: center; }
.app-btn {
  position: relative; display: grid; place-items: center; width: 44px; height: 100%; background: none;
}
.search {
  display: flex; align-items: center; gap: 10px; width: 217px; height: 30px; margin: 0 4px; padding: 0 10px;
  border-radius: 15px; background: #f1f1f1;
}
.search input { width: 150px; border: 0; background: none; font-size: 16px; padding: 0; }
.search input::placeholder { color: #555; opacity: 1; }
.current { background: #2e2e2e; }
.open::after, .current::after {
  content: ""; position: absolute; bottom: 5px; width: 6px; height: 3px; border-radius: 2px; background: #9a9a9a;
}
.current::after { width: 16px; background: #4adcf0; }
.tray { justify-self: end; display: flex; align-items: center; gap: 17px; padding-right: 19px; }
.status { display: flex; gap: 6px; }
.clock { font-size: 11px; line-height: 16px; text-align: right; }
```
